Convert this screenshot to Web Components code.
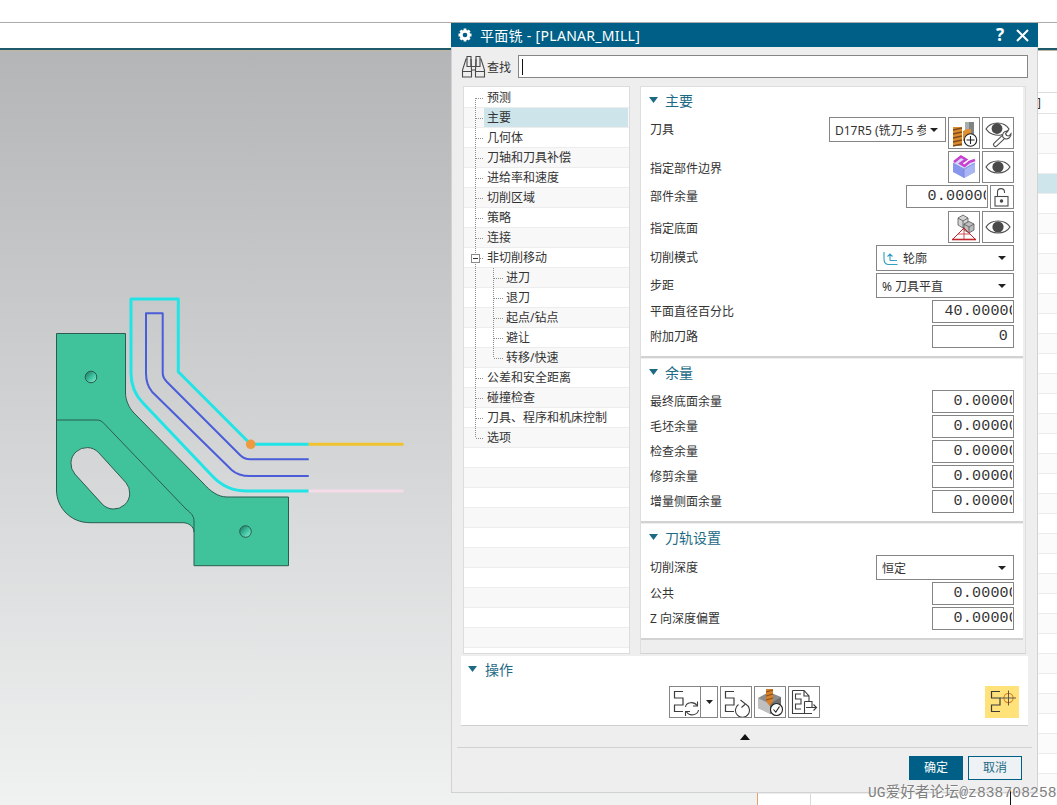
<!DOCTYPE html>
<html lang="zh">
<head>
<meta charset="utf-8">
<title>平面铣</title>
<style>
  html, body { margin: 0; padding: 0; width: 1057px; height: 805px; overflow: hidden; background: #fff; }
  body { font-family: "Noto Sans", "Noto Sans CJK SC", sans-serif; font-size: 12px; color: #333; }
</style>
</head>
<body>
<ug-app>
  <ug-canvas slot="canvas"></ug-canvas>
  <ug-side-table slot="side"></ug-side-table>
  <ug-dialog slot="dialog" title="平面铣 - [PLANAR_MILL]">
    <ug-tree slot="tree">
      <ug-tree-row label="预测" first></ug-tree-row>
      <ug-tree-row label="主要" selected></ug-tree-row>
      <ug-tree-row label="几何体"></ug-tree-row>
      <ug-tree-row label="刀轴和刀具补偿"></ug-tree-row>
      <ug-tree-row label="进给率和速度"></ug-tree-row>
      <ug-tree-row label="切削区域"></ug-tree-row>
      <ug-tree-row label="策略"></ug-tree-row>
      <ug-tree-row label="连接"></ug-tree-row>
      <ug-tree-row label="非切削移动" open></ug-tree-row>
      <ug-tree-row label="进刀" sub="first"></ug-tree-row>
      <ug-tree-row label="退刀" sub="mid"></ug-tree-row>
      <ug-tree-row label="起点/钻点" sub="mid"></ug-tree-row>
      <ug-tree-row label="避让" sub="mid"></ug-tree-row>
      <ug-tree-row label="转移/快速" sub="last"></ug-tree-row>
      <ug-tree-row label="公差和安全距离"></ug-tree-row>
      <ug-tree-row label="碰撞检查"></ug-tree-row>
      <ug-tree-row label="刀具、程序和机床控制"></ug-tree-row>
      <ug-tree-row label="选项" last></ug-tree-row>
    </ug-tree>

    <ug-section slot="panel" title="主要" style="--head:25px;--top:5px">
      <ug-row label="刀具" style="--lh:26px">
        <ug-select width="117" height="25" text="D17R5 (铣刀-5 参数)" small></ug-select>
        <ug-tool icon="tool"></ug-tool>
        <ug-tool icon="eyetool"></ug-tool>
      </ug-row>
      <ug-row label="指定部件边界" style="--lh:36px">
        <ug-tool icon="part"></ug-tool>
        <ug-tool icon="eye"></ug-tool>
      </ug-row>
      <ug-row label="部件余量">
        <ug-field value="0.00000" clip></ug-field>
        <ug-tool icon="lock" w="24" h="24"></ug-tool>
      </ug-row>
      <ug-row label="指定底面" style="--lh:36px">
        <ug-tool icon="floor"></ug-tool>
        <ug-tool icon="eye"></ug-tool>
      </ug-row>
      <ug-row label="切削模式" style="--lh:26px">
        <ug-select width="138" height="26" text="轮廓" icon></ug-select>
      </ug-row>
      <ug-row label="步距" style="--lh:25px">
        <ug-select width="138" height="25" text="% 刀具平直"></ug-select>
      </ug-row>
      <ug-row label="平面直径百分比"><ug-field value="40.00000" clip></ug-field></ug-row>
      <ug-row label="附加刀路"><ug-field value="0"></ug-field></ug-row>
    </ug-section>

    <ug-section slot="panel" title="余量" style="--top:5px">
      <ug-row label="最终底面余量"><ug-field value="0.00000" clip></ug-field></ug-row>
      <ug-row label="毛坯余量"><ug-field value="0.00000" clip></ug-field></ug-row>
      <ug-row label="检查余量"><ug-field value="0.00000" clip></ug-field></ug-row>
      <ug-row label="修剪余量"><ug-field value="0.00000" clip></ug-field></ug-row>
      <ug-row label="增量侧面余量"><ug-field value="0.00000" clip></ug-field></ug-row>
    </ug-section>

    <ug-section slot="panel" title="刀轨设置" style="--top:5px">
      <ug-row label="切削深度" style="--lh:25px">
        <ug-select width="138" height="25" text="恒定"></ug-select>
      </ug-row>
      <ug-row label="公共"><ug-field value="0.00000" clip></ug-field></ug-row>
      <ug-row label="Z 向深度偏置"><ug-field value="0.00000" clip></ug-field></ug-row>
    </ug-section>

    <ug-actions slot="actions"></ug-actions>
  </ug-dialog>
</ug-app>

<script>
const SERP = '<path d="M13 4.500H4.500V11H13V18H4.500V24.500H13" fill="none" stroke="#3d3d3d" stroke-width="1.200"/>';

const ICONS = {
  gear: `<svg width="16" height="16" viewBox="0 0 16 16"><g stroke="#fff" stroke-width="2.800"><path d="M8 1.500v13M1.500 8h13M3.400 3.400l9.200 9.200M12.600 3.400l-9.200 9.200"/></g><circle cx="8" cy="8" r="5.200" fill="#fff"/><circle cx="8" cy="8" r="2.300" fill="#005f86"/></svg>`,
  close: `<svg width="13" height="13" viewBox="0 0 13 13"><path d="M1 1l11 11M12 1L1 12" stroke="#fff" stroke-width="2" fill="none"/></svg>`,
  binoculars: `<svg width="25" height="23" viewBox="0 0 25 23" fill="none" stroke="#4a4a4a" stroke-width="1.100"><path d="M6 1.500h4v10H6zM15 1.500h4v10h-4z"/><path d="M6 4H5L1.500 15v7h9v-7L10 4M15 4l-.5 11v7h9v-7L20 4h-1"/><path d="M1.500 16.500h9M14.500 16.500h9M10.500 11.500h4M10.500 15h4"/></svg>`,
  eye: `<svg width="30" height="30" viewBox="0 0 30 30"><path d="M3 15C8 7 22 7 27 15C22 23 8 23 3 15Z" fill="#fff" stroke="#4f4f4f" stroke-width="1.200"/><circle cx="15" cy="15" r="5.600" fill="#4a4a4a"/></svg>`,
  eyetool: `<svg width="30" height="30" viewBox="0 0 30 30"><path d="M3 11C8 3 21 3 26 11C24 14 21 16.500 18 17C13 18 6 16 3 11Z" fill="#fff" stroke="#4f4f4f" stroke-width="1.200"/><circle cx="14" cy="10.500" r="5.400" fill="#4a4a4a"/><path d="M12.500 26.500l9-8.500" stroke="#4f4f4f" stroke-width="5" stroke-linecap="round"/><path d="M12.500 26.500l9-8.500" stroke="#fff" stroke-width="2.800" stroke-linecap="round"/><path d="M20 19.500C18.500 16 21 12.500 25 13L22.500 15.500L23.500 17.500L26 18L28 15.500C28.500 19.500 24.500 22 21.500 20.500Z" fill="#fff" stroke="#4f4f4f" stroke-width="1.100"/></svg>`,
  tool: `<svg width="30" height="30" viewBox="0 0 30 30"><rect x="16" y="4" width="9" height="15" fill="#7f8484"/><rect x="16" y="4" width="4" height="15" fill="#a9adad"/><path d="M14 13l4-2h4v12h-8z" fill="#e2902f"/><rect x="4" y="9" width="9" height="19" fill="#de8a2e"/><path d="M4 12l9-2M4 16l9-2M4 20l9-2M4 24l9-2M4 28l9-2" stroke="#7c4d1c" stroke-width="1.300"/><circle cx="21.500" cy="22" r="6.200" fill="#fff" stroke="#222" stroke-width="1.100"/><path d="M21.500 18v8M17.500 22h8" stroke="#222" stroke-width="1.100"/></svg>`,
  part: `<svg width="30" height="30" viewBox="0 0 30 30"><path d="M4 11L15 17L26 11V20L15 26L4 20Z" fill="#8796ec"/><path d="M15 17V26L26 20V11Z" fill="#aab6f4"/><path d="M4 11L13 5L17 8L13 11L15 13L20 9L26 11L15 17Z" fill="#d5dbfc"/><path d="M4 11L15 17L26 11M15 17V26" fill="none" stroke="#6f7fd8" stroke-width=".7"/><path d="M5 10L12 4.500L17 7.500L11.500 11.500L15.500 14L20.500 9.800L26 8" fill="none" stroke="#c93fd0" stroke-width="2.600"/></svg>`,
  floor: `<svg width="30" height="30" viewBox="0 0 30 30"><path d="M9 6L14 3L19 6V13L14 16L9 13Z" fill="#d4d4d4" stroke="#555" stroke-width=".8"/><path d="M9 6L14 9L19 6M14 9V16" fill="none" stroke="#555" stroke-width=".8"/><path d="M15 12L20 9.500L25 12V18L20 21L15 18Z" fill="#bdbdbd" stroke="#555" stroke-width=".8"/><path d="M15 12L20 15L25 12M20 15V21" fill="none" stroke="#555" stroke-width=".8"/><path d="M4 27L15 16L26 27" fill="none" stroke="#c2272d" stroke-width="1"/><path d="M3 27.500H27" stroke="#c2272d" stroke-width="1.600"/><path d="M15 16V27M9 22H21" stroke="#c2272d" stroke-width=".8"/></svg>`,
  lock: `<svg width="22" height="22" viewBox="0 0 22 22" fill="none" stroke="#4a4a4a" stroke-width="1.100"><rect x="4" y="10.500" width="13" height="9.500"/><path d="M6.500 10.500V6C6.500 1.500 13.500 1.500 13.500 6V7"/><circle cx="10.500" cy="15" r="1.200" fill="#4a4a4a"/></svg>`,
  contour: `<svg width="16" height="15" viewBox="0 0 16 15" fill="none" stroke="#2f9fbd" stroke-width="1.100"><path d="M2 1V8C2 11.500 4 13.500 7 13.500H15.500"/><path d="M8 9.500V3M5.500 5.500L8 3L10.500 5.500M8 9.500H15"/></svg>`,
  generate: `<svg width="30" height="30" viewBox="0 0 30 30">${SERP}<g fill="none" stroke="#3d3d3d" stroke-width="1.100"><path d="M15.500 20C16 15 24 14 27 18.500"/><path d="M28.500 23C27.500 28.500 19.500 29.500 16.500 25"/><path d="M27.500 14.500V19H23M15.500 29V24.500H20"/></g></svg>`,
  replay: `<svg width="30" height="30" viewBox="0 0 30 30">${SERP}<g fill="none" stroke="#3d3d3d" stroke-width="1.100"><path d="M24.500 17A7 7 0 1 1 17.500 17.500"/><path d="M19.500 13L24.500 17L20.500 20.500"/></g></svg>`,
  verify: `<svg width="30" height="30" viewBox="0 0 30 30"><path d="M3 11L14 5L26 10V21L16 27L3 21Z" fill="#8d8d8d"/><path d="M3 11L15 17V27L3 21Z" fill="#bfbfbf"/><path d="M15 17L26 10V21L15 27Z" fill="#6f6f6f"/><path d="M11 2H18V14L14.500 19L11 14Z" fill="#d8812b"/><path d="M11 5l7-2M11 9l7-2M11 13l7-2" stroke="#8a4f17" stroke-width="1.200"/><circle cx="21.500" cy="22.500" r="6" fill="#fff" stroke="#222" stroke-width="1.100"/><path d="M18.500 22.500L20.800 25L24.500 19.500" fill="none" stroke="#222" stroke-width="1.100"/></svg>`,
  list: `<svg width="30" height="30" viewBox="0 0 30 30" fill="none" stroke="#3d3d3d" stroke-width="1.100"><path d="M3.500 3.500H15L20 9V14M3.500 3.500V26.500H15M15 3.500V9H20"/><path d="M12 7H6.500V12H12V17H6.500V22H12"/><path d="M15.500 14.500V26.500H23M15.500 14.500H23V20.500M17 20.500H27.500M24.500 17.500L27.500 20.500L24.500 23.500"/></svg>`,
  locate: `<svg width="30" height="30" viewBox="0 0 30 30">${SERP}<circle cx="21.500" cy="11" r="4.600" fill="none" stroke="#d8812b" stroke-width="1.100"/><path d="M21.500 3.500V18.500M13 11H29" stroke="#4a4a4a" stroke-width=".9"/></svg>`
};

class UgApp extends HTMLElement {
  constructor() {
    super();
    this.attachShadow({ mode: 'open' });
    this.shadowRoot.innerHTML = `
      <style>
        :host { display: flex; flex-direction: column; width: 1057px; height: 805px; position: relative; overflow: hidden; background: #fff; }
        .menu { height: 22px; border-bottom: 1px solid #acacac; flex: none; }
        .ribbon { height: 25px; flex: none; border-bottom: 2px solid #1d5a6c; box-sizing: content-box; }
        .tan { height: 1px; background: #c4b4a4; flex: none; }
        .main { flex: 1; display: flex; min-height: 0; }
        .watermark {
          position: absolute; left: 868px; top: 783px; white-space: nowrap; letter-spacing: .1px;
          font: 14.600px/20px "Liberation Mono", "Noto Sans CJK SC", monospace; color: #808080;
          text-shadow: 1px 0 0 rgba(255,255,255,.7), 0 1px 0 rgba(255,255,255,.7);
        }
        .cursor { position: absolute; left: 1010px; top: 789px; width: 1px; height: 16px; background: #111; }
      </style>
      <div class="menu"></div>
      <div class="ribbon"></div>
      <div class="tan"></div>
      <div class="main"><slot name="canvas"></slot><slot name="side"></slot></div>
      <slot name="dialog"></slot>
      <div class="cursor"></div>
      <div class="watermark">UG爱好者论坛@z838708258</div>
    `;
  }
}

class UgCanvas extends HTMLElement {
  constructor() {
    super();
    this.attachShadow({ mode: 'open' });
    this.shadowRoot.innerHTML = `
      <style>
        :host { display: block; width: 757px; height: 100%; background: linear-gradient(#b4b5b6, #f0f1f1); border-right: 1px solid #e8a06a; }
        svg { display: block; }
      </style>
      <svg width="757" height="754" viewBox="0 51 757 754">
        <defs>
          <linearGradient id="hole" x1="0" y1="0" x2="1" y2="1"><stop offset="0" stop-color="#17705e"/><stop offset=".5" stop-color="#3cbf9c"/><stop offset="1" stop-color="#8ff2d6"/></linearGradient>
        </defs>
        <path fill="#40c29a" stroke="#2b5c50" stroke-width="1" fill-rule="evenodd"
          d="M56.500 333.500H125.500V393C125.500 400 129 408 134 413L203 483C210 491 218 497 227 497H288.500V565.700H194V532C194 527 189 522.700 183 522.700H90C71 522.700 56.500 508 56.500 490Z
             M98.500 452.500L125.800 482.500A16 16 0 0 1 102.200 504.100L74.900 474.100A16 16 0 0 1 98.500 452.500Z"/>
        <path fill="none" stroke="#2b5c50" stroke-width="1" d="M56.500 420H96C100 420 102 421 104.500 424L186 509C191 513 194 516 194 521V532"/>
        <circle cx="91" cy="377" r="5.800" fill="url(#hole)" stroke="#2b5c50"/>
        <circle cx="245.500" cy="531.500" r="5.800" fill="url(#hole)" stroke="#2b5c50"/>
        <path fill="none" stroke="#22e4e6" stroke-width="3" stroke-linejoin="round"
          d="M308.700 444.300H250.700L178.300 371.700V299H131V373C131 385 136 396 143 403L213 476.700C222 486 233 491 246.700 491H308.700"/>
        <path fill="none" stroke="#4a5cd8" stroke-width="2" stroke-linejoin="round"
          d="M308.700 459.300H250C246 459.300 243 458 240 455L167 382C164 379 162.700 377 162.700 373V313.300H146V373C146 380 148 387 152 391.700L231.700 470C236 474 242 476 250 476H308.700"/>
        <path d="M308.700 444.300H403.500" stroke="#efc22e" stroke-width="3"/>
        <path d="M308.700 491H403.500" stroke="#f5dce8" stroke-width="3"/>
        <circle cx="250.700" cy="444.300" r="4.800" fill="#f09a40"/>
      </svg>
    `;
  }
}

class UgSideTable extends HTMLElement {
  constructor() {
    super();
    this.attachShadow({ mode: 'open' });
    let rows = '';
    for (let i = 0; i < 35; i++) {
      const cls = i === 3 ? 'row sel' : (i % 2 === 1 ? 'row alt' : 'row');
      rows += `<div class="${cls}"><span class="cell"></span></div>`;
    }
    this.shadowRoot.innerHTML = `
      <style>
        :host { display: block; flex: 1; padding-top: 41px; background: #fff; overflow: hidden; }
        .head { height: 20px; border-top: 1px solid #dcdcdc; border-bottom: 1px solid #e2e2e2; padding-left: 279px; font-size: 12px; line-height: 20px; color: #333; }
        .row { height: 19px; border-bottom: 1px solid #ececec; display: flex; }
        .alt { background: #fbfbfb; }
        .sel { background: #cfe5ec; }
        .cell { width: 52px; border-right: 1px solid #d8d8d8; }
      </style>
      <div class="head">]</div>
      ${rows}
    `;
  }
}

class UgDialog extends HTMLElement {
  constructor() {
    super();
    this.attachShadow({ mode: 'open' });
  }

  connectedCallback() {
    const title = this.getAttribute('title') || '';
    this.removeAttribute('title');
    this.shadowRoot.innerHTML = `
      <style>
        :host {
          display: flex; flex-direction: column; box-sizing: border-box;
          position: absolute; left: 451px; top: 23px; width: 587px; height: 770px;
          background: #eeeeee; border: 1px solid #d2d2d2; border-top: none;
          font-family: "Noto Sans", "Noto Sans CJK SC", sans-serif;
        }
        .title { height: 24px; flex: none; margin: 0 -1px; background: #005f86; color: #fff; display: flex; align-items: center; padding: 0 9px 0 6px; font-size: 14px; }
        .title .gear { display: flex; margin-right: 7px; }
        .title .text { flex: 1; white-space: nowrap; letter-spacing: .3px; }
        .title .help { font-size: 17px; font-weight: 700; margin-right: 12px; line-height: 24px; }
        .title .close { display: flex; }
        .search { height: 39px; flex: none; display: flex; align-items: center; padding: 0 9px 0 9px; box-sizing: border-box; }
        .search .glass { display: flex; margin-right: 1px; }
        .search label { font-size: 12px; color: #333; width: 31px; }
        .search .box { flex: 1; height: 23px; box-sizing: border-box; border: 1px solid #858585; background: #fff; display: flex; align-items: center; padding-left: 3px; }
        .search .caret { width: 1px; height: 16px; background: #111; }
        .body { height: 568px; flex: none; display: flex; gap: 10px; padding-left: 11px; }
        .panel { width: 386px; box-sizing: border-box; border: 1px solid #dedede; border-bottom-color: #d2d2d2; display: flex; flex-direction: column; background: #eeeeee; }
        .actions { margin: 2px 9px 0 9px; flex: none; }
        .expand { height: 21px; flex: none; display: flex; align-items: center; justify-content: center; margin: 0 5px; border-bottom: 1px solid #d2d2d2; }
        .footer { flex: 1; display: flex; justify-content: flex-end; gap: 5px; padding: 8px 15px 0 0; }
        .btn { width: 54px; height: 24px; box-sizing: border-box; font-size: 12px; line-height: 22px; text-align: center; border: 1px solid #005f86; }
        .ok { background: #005f86; color: #fff; }
        .cancel { background: #eef2f5; color: #1d6a85; }
      </style>
      <div class="title">
        <span class="gear">${ICONS.gear}</span>
        <span class="text">${title}</span>
        <span class="help">?</span>
        <span class="close">${ICONS.close}</span>
      </div>
      <div class="search">
        <span class="glass">${ICONS.binoculars}</span>
        <label>查找</label>
        <div class="box"><span class="caret"></span></div>
      </div>
      <div class="body">
        <slot name="tree"></slot>
        <div class="panel"><slot name="panel"></slot></div>
      </div>
      <div class="actions"><slot name="actions"></slot></div>
      <div class="expand"><svg width="10" height="6" viewBox="0 0 10 6"><path d="M0 6L5 0L10 6Z" fill="#111"/></svg></div>
      <div class="footer">
        <div class="btn ok">确定</div>
        <div class="btn cancel">取消</div>
      </div>
    `;
  }
}

class UgTree extends HTMLElement {
  constructor() {
    super();
    this.attachShadow({ mode: 'open' });
    this.shadowRoot.innerHTML = `
      <style>
        :host { display: block; width: 167px; height: 568px; box-sizing: border-box; background: #fff; border: 1px solid #dcdcdc; padding-top: 1px; overflow: hidden; }
        ::slotted(ug-tree-row:nth-child(even)) { --row-bg: #f8f8f8; }
      </style>
      <slot></slot>
    `;
  }

  connectedCallback() {
    while (this.children.length < 28) {
      this.appendChild(document.createElement('ug-tree-row'));
    }
  }
}

class UgTreeRow extends HTMLElement {
  constructor() {
    super();
    this.attachShadow({ mode: 'open' });
  }

  connectedCallback() {
    const label = this.getAttribute('label') || '';
    const sub = this.getAttribute('sub');
    let guide = '';
    if (label) {
      const top = this.hasAttribute('first') ? 10 : 0;
      const bottom = this.hasAttribute('last') ? 10 : 20;
      let lines = `<path d="M11.500 ${top}V${bottom}"/>`;
      if (sub) {
        const subBottom = sub === 'last' ? 10 : 20;
        lines += `<path d="M29.500 0V${subBottom}M30 10.500H39"/>`;
      } else {
        lines += `<path d="M12 10.500H20"/>`;
      }
      const box = this.hasAttribute('open')
        ? `<rect x="7.500" y="6.500" width="8" height="8" fill="#fff" stroke="#8a8a8a" stroke-dasharray="none"/><path d="M9 10.500H14" stroke="#333" stroke-dasharray="none"/>`
        : '';
      const w = sub ? 39 : 20;
      guide = `<svg width="${w}" height="20" viewBox="0 0 ${w} 20" fill="none" stroke="#8e8e8e" stroke-dasharray="1 1">${lines}${box}</svg>`;
    }
    const selected = this.hasAttribute('selected');
    this.shadowRoot.innerHTML = `
      <style>
        :host { display: flex; height: 20px; box-sizing: border-box; border-bottom: 1px solid #ededed; background: var(--row-bg, #fff); font-size: 12px; color: #333; }
        svg { display: block; flex: none; }
        .label { flex: 1; padding-left: 3px; line-height: 20px; height: 19px; white-space: nowrap; ${selected ? 'background: #cde4ea; margin-right: 1px;' : ''} }
      </style>
      ${guide}<span class="label">${label}</span>
    `;
  }
}

class UgSection extends HTMLElement {
  constructor() {
    super();
    this.attachShadow({ mode: 'open' });
  }

  connectedCallback() {
    const title = this.getAttribute('title') || '';
    this.removeAttribute('title');
    this.shadowRoot.innerHTML = `
      <style>
        :host { display: block; flex: none; background: #fff; border-bottom: 2px solid #d2d2d2; margin: 0 2px 1px 0; }
        .head { height: var(--head, 26px); display: flex; align-items: center; padding-left: 8px; gap: 7px; color: #1d6a85; font-size: 14px; }
        .rows { display: flex; flex-direction: column; gap: 2px; padding: var(--top, 4px) 9px 8px 9px; }
      </style>
      <div class="head">
        <svg width="9" height="6" viewBox="0 0 9 6"><path d="M0 0H9L4.500 6Z" fill="#1d6a85"/></svg>
        <span>${title}</span>
      </div>
      <div class="rows"><slot></slot></div>
    `;
  }
}

class UgRow extends HTMLElement {
  constructor() {
    super();
    this.attachShadow({ mode: 'open' });
  }

  connectedCallback() {
    const label = this.getAttribute('label') || '';
    this.shadowRoot.innerHTML = `
      <style>
        :host { display: flex; align-items: flex-start; font-size: 12px; color: #333; }
        .label { flex: 1; height: 23px; line-height: var(--lh, 23px); white-space: nowrap; }
        .ctl { display: flex; gap: 2px; }
      </style>
      <span class="label">${label}</span>
      <div class="ctl"><slot></slot></div>
    `;
  }
}

class UgSelect extends HTMLElement {
  constructor() {
    super();
    this.attachShadow({ mode: 'open' });
  }

  connectedCallback() {
    const w = this.getAttribute('width');
    const h = this.getAttribute('height');
    const text = this.getAttribute('text') || '';
    const icon = this.hasAttribute('icon') ? `<span class="ico">${ICONS.contour}</span>` : '';
    const textWidth = this.hasAttribute('small') ? 'max-width: 91px;' : '';
    this.shadowRoot.innerHTML = `
      <style>
        :host { display: flex; box-sizing: border-box; width: ${w}px; height: ${h}px; border: 1px solid #858585; background: #fff; align-items: center; padding: 0 5px; font-size: 12px; color: #333; }
        .ico { display: flex; margin-right: 5px; }
        .text { flex: 1; white-space: nowrap; overflow: hidden; }
        .clip { display: block; overflow: hidden; ${textWidth} }
        svg.arrow { flex: none; margin-right: 2px; }
      </style>
      ${icon}<span class="text"><span class="clip">${text}</span></span>
      <svg class="arrow" width="8" height="4" viewBox="0 0 8 4"><path d="M0 0H8L4 4Z" fill="#222"/></svg>
    `;
  }
}

class UgField extends HTMLElement {
  constructor() {
    super();
    this.attachShadow({ mode: 'open' });
  }

  connectedCallback() {
    const value = this.getAttribute('value') || '';
    const clip = this.hasAttribute('clip');
    this.shadowRoot.innerHTML = `
      <style>
        :host { display: flex; box-sizing: border-box; width: 82px; height: 23px; border: 1px solid #858585; background: #fff; justify-content: flex-end; padding-right: 1px; overflow: hidden; }
        .val { font: 15px/22px "Liberation Mono", monospace; letter-spacing: .2px; color: #333; white-space: nowrap; margin-right: ${clip ? '-6px' : '4px'}; flex: none; }
        .clipper { display: flex; justify-content: flex-end; overflow: hidden; flex: 1; }
      </style>
      <div class="clipper"><span class="val">${value}</span></div>
    `;
  }
}

class UgTool extends HTMLElement {
  constructor() {
    super();
    this.attachShadow({ mode: 'open' });
  }

  connectedCallback() {
    const w = this.getAttribute('w') || 32;
    const h = this.getAttribute('h') || 32;
    const bg = this.getAttribute('bg');
    this.shadowRoot.innerHTML = `
      <style>
        :host { display: flex; box-sizing: border-box; width: ${w}px; height: ${h}px; border: 1px solid ${bg ? bg : '#858585'}; background: ${bg || '#fff'}; align-items: center; justify-content: center; }
        svg { display: block; }
      </style>
      ${ICONS[this.getAttribute('icon')] || ''}
    `;
  }
}

class UgActions extends HTMLElement {
  constructor() {
    super();
    this.attachShadow({ mode: 'open' });
    this.shadowRoot.innerHTML = `
      <style>
        :host { display: block; background: #fff; border-bottom: 1px solid #cfcfcf; height: 70px; box-sizing: border-box; }
        .head { height: 25px; display: flex; align-items: center; padding-left: 7px; gap: 8px; color: #1d6a85; font-size: 14px; }
        .bar { display: flex; align-items: flex-start; padding: 5px 9px 0 208px; }
        .group { display: flex; gap: 2px; flex: 1; }
        .split { display: flex; box-sizing: border-box; width: 49px; height: 32px; border: 1px solid #858585; }
        .split .main { width: 30px; border-right: 1px solid #858585; display: flex; align-items: center; justify-content: center; }
        .split .drop { flex: 1; display: flex; align-items: center; justify-content: center; }
      </style>
      <div class="head">
        <svg width="9" height="6" viewBox="0 0 9 6"><path d="M0 0H9L4.500 6Z" fill="#1d6a85"/></svg>
        <span>操作</span>
      </div>
      <div class="bar">
        <div class="group">
          <div class="split">
            <div class="main">${ICONS.generate}</div>
            <div class="drop"><svg width="7" height="4" viewBox="0 0 7 4"><path d="M0 0H7L3.500 4Z" fill="#222"/></svg></div>
          </div>
          <ug-tool icon="replay"></ug-tool>
          <ug-tool icon="verify"></ug-tool>
          <ug-tool icon="list"></ug-tool>
        </div>
        <ug-tool icon="locate" w="34" bg="#ffe27a"></ug-tool>
      </div>
    `;
  }
}

customElements.define('ug-tool', UgTool);
customElements.define('ug-field', UgField);
customElements.define('ug-select', UgSelect);
customElements.define('ug-row', UgRow);
customElements.define('ug-section', UgSection);
customElements.define('ug-tree-row', UgTreeRow);
customElements.define('ug-tree', UgTree);
customElements.define('ug-actions', UgActions);
customElements.define('ug-dialog', UgDialog);
customElements.define('ug-side-table', UgSideTable);
customElements.define('ug-canvas', UgCanvas);
customElements.define('ug-app', UgApp);
</script>
</body>
</html>
